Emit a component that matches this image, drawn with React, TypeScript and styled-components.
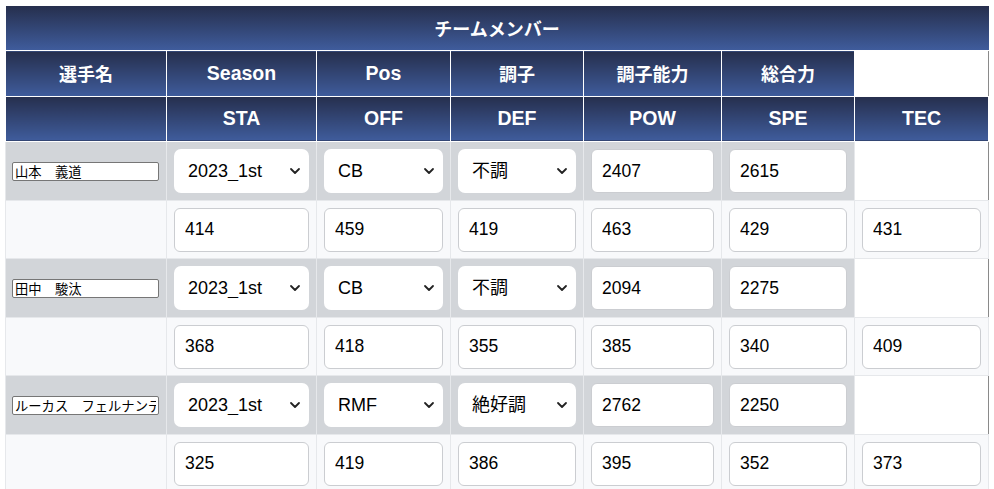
import React from 'react';
import styled, { createGlobalStyle } from 'styled-components';

const GlobalStyle = createGlobalStyle`
    body{
        margin:0;
        background:#fff;
        font-family:"Liberation Sans","Noto Sans CJK JP",sans-serif;
    }
`;

const Page = styled.div`
    padding:6px 6px 0 5px;
`;

const MemberTable = styled.table`
    width:983px;
    border-collapse:collapse;
    table-layout:fixed;
`;

const HeadCell = styled.th<{ $empty?: boolean; $latin?: boolean }>`
    height:44.5px;
    padding:0;
    border:1px solid #fff;
    color:#fff;
    font-size:${p => p.$latin ? '19.5px' : '18px'};
    font-weight:bold;
    text-align:center;
    background:${p => p.$empty ? '#fff' : 'linear-gradient(to bottom,#262f4d,#3f5c9c)'};
    border-right-color:${p => p.$empty ? '#8a8a8a' : '#fff'};
`;

const TitleCell = styled(HeadCell)`
    height:44px;
    border-top:none;
    border-left:none;
    border-right:none;
`;

const DataRow = styled.tr<{ $shade: boolean }>`
    background:${p => p.$shade ? '#d2d5d9' : '#f8f9fb'};
`;

const DataCell = styled.td<{ $empty?: boolean }>`
    height:44px;
    padding:7px 7px 6.5px 7px;
    border:1px solid #e6e8eb;
    background:${p => p.$empty ? '#fff' : 'transparent'};
    border-right-color:${p => p.$empty ? '#8a8a8a' : '#e6e8eb'};
`;

const NameCell = styled(DataCell)`
    padding-left:6px;
`;

const NameInput = styled.input`
    display:block;
    width:147px;
    height:19px;
    box-sizing:border-box;
    padding:0 2px;
    border:1px solid #767676;
    border-radius:2px;
    background:#fff;
    font-family:"Liberation Sans","Noto Sans CJK JP",sans-serif;
    font-size:13.3px;
    color:#000;
`;

const NumInput = styled.input`
    display:block;
    width:100%;
    height:44px;
    box-sizing:border-box;
    padding:0 0 0 10px;
    border:1px solid #cbcdd1;
    border-radius:6px;
    background:#fff;
    font-family:"Liberation Sans","Noto Sans CJK JP",sans-serif;
    font-size:17.5px;
    color:#000;
`;

const SelectWrap = styled.div`
    position:relative;
`;

const Select = styled.select`
    display:block;
    width:100%;
    height:44px;
    box-sizing:border-box;
    padding:0 0 0 14px;
    border:none;
    border-radius:7px;
    background:#fff;
    appearance:none;
    font-family:"Liberation Sans","Noto Sans CJK JP",sans-serif;
    font-size:18px;
    color:#000;
`;

const Chevron = styled.svg`
    position:absolute;
    right:8px;
    top:18px;
    pointer-events:none;
`;

interface Player {
    name: string;
    season: string;
    pos: string;
    cond: string;
    condPow: number;
    total: number;
    stats: number[];
}

const players: Player[] = [
    { name: '山本　義道', season: '2023_1st', pos: 'CB', cond: '不調', condPow: 2407, total: 2615, stats: [414, 459, 419, 463, 429, 431] },
    { name: '田中　駿汰', season: '2023_1st', pos: 'CB', cond: '不調', condPow: 2094, total: 2275, stats: [368, 418, 355, 385, 340, 409] },
    { name: 'ルーカス　フェルナンデス', season: '2023_1st', pos: 'RMF', cond: '絶好調', condPow: 2762, total: 2250, stats: [325, 419, 386, 395, 352, 373] },
];

const colWidths = [161, 150, 134, 133, 138, 133, 134];

const Dropdown: React.FC<{ value: string }> = ({ value }) => (
    <SelectWrap>
        <Select value={value} onChange={() => {}}>
            <option>{value}</option>
        </Select>
        <Chevron width="12" height="8" viewBox="0 0 12 8">
            <path d="M2 2 L6 6 L10 2" fill="none" stroke="#222" strokeWidth="1.8" strokeLinecap="round" strokeLinejoin="round" />
        </Chevron>
    </SelectWrap>
);

const App: React.FC = () => {
    return <Page>
        <GlobalStyle />
        <MemberTable>
            <colgroup>
                {colWidths.map((w, i) => <col key={i} style={{ width: w }} />)}
            </colgroup>
            <thead>
                <tr><TitleCell colSpan={7}>チームメンバー</TitleCell></tr>
                <tr>
                    <HeadCell>選手名</HeadCell>
                    <HeadCell $latin>Season</HeadCell>
                    <HeadCell $latin>Pos</HeadCell>
                    <HeadCell>調子</HeadCell>
                    <HeadCell>調子能力</HeadCell>
                    <HeadCell>総合力</HeadCell>
                    <HeadCell $empty />
                </tr>
                <tr>
                    <HeadCell></HeadCell>
                    <HeadCell $latin>STA</HeadCell>
                    <HeadCell $latin>OFF</HeadCell>
                    <HeadCell $latin>DEF</HeadCell>
                    <HeadCell $latin>POW</HeadCell>
                    <HeadCell $latin>SPE</HeadCell>
                    <HeadCell $latin>TEC</HeadCell>
                </tr>
            </thead>
            <tbody>
                {players.map((p) => <React.Fragment key={p.name}>
                    <DataRow $shade>
                        <NameCell><NameInput type="text" value={p.name} readOnly /></NameCell>
                        <DataCell><Dropdown value={p.season} /></DataCell>
                        <DataCell><Dropdown value={p.pos} /></DataCell>
                        <DataCell><Dropdown value={p.cond} /></DataCell>
                        <DataCell><NumInput type="text" value={p.condPow} readOnly /></DataCell>
                        <DataCell><NumInput type="text" value={p.total} readOnly /></DataCell>
                        <DataCell $empty />
                    </DataRow>
                    <DataRow $shade={false}>
                        <DataCell />
                        {p.stats.map((s, i) => <DataCell key={i}><NumInput type="text" value={s} readOnly /></DataCell>)}
                    </DataRow>
                </React.Fragment>)}
            </tbody>
        </MemberTable>
    </Page>
}

export default App;
